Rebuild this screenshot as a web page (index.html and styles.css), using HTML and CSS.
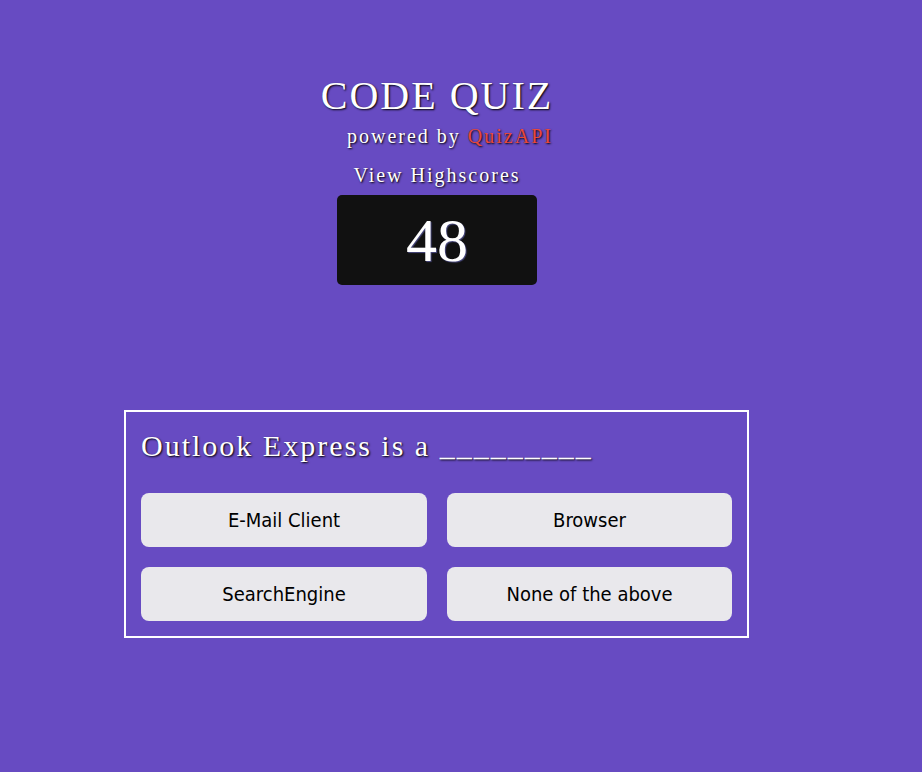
FILE: index.html
```html
<!DOCTYPE html>
<html>
<head>
<meta charset="utf-8">
<title>Code Quiz</title>
<link rel="stylesheet" href="styles.css">
</head>
<body>
<main class="page">
  <header class="header">
    <h1 class="title">CODE QUIZ</h1>
    <p class="subtitle">powered by <span class="brand">QuizAPI</span></p>
    <a class="highscores" href="#">View Highscores</a>
    <div class="timer">48</div>
  </header>
  <section class="quiz">
    <h2 class="question">Outlook Express is a _________</h2>
    <div class="answers">
      <button class="answer">E-Mail Client</button>
      <button class="answer">Browser</button>
      <button class="answer">SearchEngine</button>
      <button class="answer">None of the above</button>
    </div>
  </section>
</main>
</body>
</html>
```
FILE: styles.css
```css
html, body {
  margin: 0;
  padding: 0;
}
body {
  background: #674bc2;
  font-family: "Liberation Serif", "Times New Roman", serif;
  color: #fff;
  letter-spacing: 2px;
  min-height: 772px;
}
.page {
  width: 858px;
  margin-left: 8px;
  padding-top: 73px;
  display: flex;
  flex-direction: column;
  align-items: center;
}
.header {
  display: flex;
  flex-direction: column;
  align-items: center;
}
.title {
  margin: 0;
  font-size: 40px;
  line-height: 46px;
  font-weight: normal;
  text-shadow: 1px 1px 2px #000;
}
.subtitle {
  margin: 6px 0 0 26px;
  font-size: 20px;
  line-height: 23px;
  text-shadow: 1px 1px 2px #000;
}
.brand {
  color: #e9483a;
}
.highscores {
  margin-top: 16px;
  font-size: 20px;
  line-height: 23px;
  color: #fff;
  text-decoration: none;
  text-shadow: 1px 1px 2px #000;
}
.timer {
  margin-top: 8px;
  width: 200px;
  height: 90px;
  border-radius: 5px;
  background: #111;
  font-family: "Liberation Serif", "Times New Roman", serif;
  font-size: 62px;
  line-height: 90px;
  letter-spacing: 0;
  text-align: center;
  text-shadow: 1px 1px 1px #4a4a80;
}
.quiz {
  align-self: flex-start;
  margin: 125px 0 0 116px;
  width: 591px;
  border: 2px solid #fff;
  padding: 15px;
}
.question {
  margin: 2px 0 30px 0;
  font-size: 30px;
  line-height: 34px;
  font-weight: normal;
  text-shadow: 1px 1px 2px #000;
}
.answers {
  display: grid;
  grid-template-columns: 286px 285px;
  gap: 20px;
}
.answer {
  height: 54px;
  border: none;
  border-radius: 8px;
  background: #e9e8ec;
  color: #000;
  font-family: "DejaVu Sans Condensed", "DejaVu Sans", sans-serif;
  font-size: 20px;
  letter-spacing: 0;
  padding: 0;
}
```
